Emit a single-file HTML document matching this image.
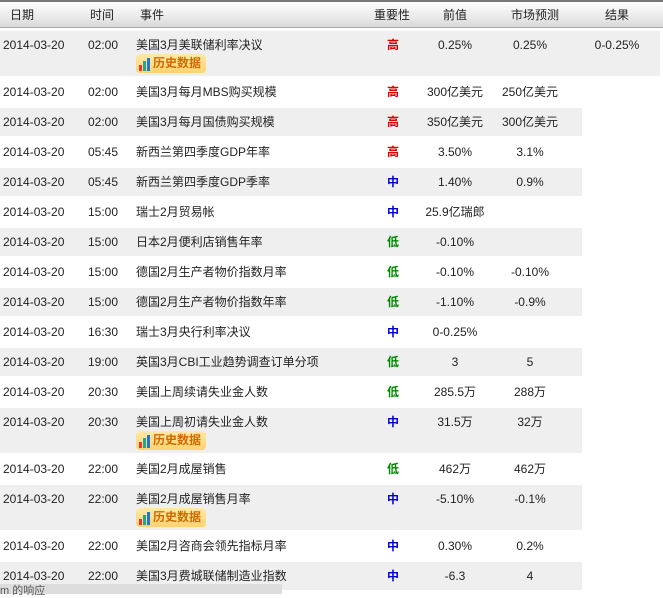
<!DOCTYPE html>
<html><head><meta charset="utf-8"><style>
*{margin:0;padding:0;box-sizing:border-box}
body{width:663px;height:594px;overflow:hidden;background:#fff;font-family:"Liberation Sans","Noto Sans CJK SC",sans-serif;font-size:12px;color:#222;position:relative}
.hd{position:absolute;left:0;top:0;width:663px;height:28px;border-top:2px solid #777;border-bottom:1px solid #aaa;background:linear-gradient(#fff,#e6e6e6 70%,#d8d8d8)}
.r{position:absolute;left:0;width:582px}
.g{background:#efefef}
.c{position:absolute;white-space:nowrap;line-height:14px}
.b{position:absolute;left:136px;width:70px;height:19px;background:linear-gradient(#ffe9a8,#fcd36f);border-radius:4px;font-weight:bold;color:#d06a00;font-size:12px;line-height:19px;padding-left:17px}
.b i{position:absolute;left:3px;bottom:2px;width:3px;height:6px;background:#e33}
.b i+i{left:7px;height:10px;background:#2a8}
.b i+i+i{left:11px;height:13px;background:#27c}
.H{color:#d00;font-weight:bold}.M{color:#00c;font-weight:bold}.L{color:#080;font-weight:bold}
.ov{position:absolute;left:0;top:584px;width:282px;height:10px;background:#ddd;font-size:11px;color:#555;line-height:14px;padding-left:0}
</style></head><body>
<div class="hd"></div>
<div class="c" style="left:10px;top:8px">日期</div>
<div class="c" style="left:90px;top:8px">时间</div>
<div class="c" style="left:140px;top:8px">事件</div>
<div class="c" style="left:374px;top:8px">重要性</div>
<div class="c" style="left:443px;top:8px">前值</div>
<div class="c" style="left:511px;top:8px">市场预测</div>
<div class="c" style="left:605px;top:8px">结果</div>
<div id="rows"></div>
<div class="ov">m 的响应</div>
<script>
var d=[
["02:00","美国3月美联储利率决议","H","0.25%","0.25%","0-0.25%",1],
["02:00","美国3月每月MBS购买规模","H","300亿美元","250亿美元","",0],
["02:00","美国3月每月国债购买规模","H","350亿美元","300亿美元","",0],
["05:45","新西兰第四季度GDP年率","H","3.50%","3.1%","",0],
["05:45","新西兰第四季度GDP季率","M","1.40%","0.9%","",0],
["15:00","瑞士2月贸易帐","M","25.9亿瑞郎","","",0],
["15:00","日本2月便利店销售年率","L","-0.10%","","",0],
["15:00","德国2月生产者物价指数月率","L","-0.10%","-0.10%","",0],
["15:00","德国2月生产者物价指数年率","L","-1.10%","-0.9%","",0],
["16:30","瑞士3月央行利率决议","M","0-0.25%","","",0],
["19:00","英国3月CBI工业趋势调查订单分项","L","3","5","",0],
["20:30","美国上周续请失业金人数","L","285.5万","288万","",0],
["20:30","美国上周初请失业金人数","M","31.5万","32万","",1],
["22:00","美国2月成屋销售","L","462万","462万","",0],
["22:00","美国2月成屋销售月率","M","-5.10%","-0.1%","",1],
["22:00","美国2月咨商会领先指标月率","M","0.30%","0.2%","",0],
["22:00","美国3月费城联储制造业指数","M","-6.3","4","",0]];
var y=30,h="",imp={H:"高",M:"中",L:"低"};
function ctr(x,t,yy,cl){return '<div class="c '+(cl||'')+'" style="left:'+(x-60)+'px;width:120px;text-align:center;top:'+yy+'px">'+t+'</div>';}
d.forEach(function(r,i){
 var ht=r[6]?47:30;
 var w=(i==0)?660:582;
 if(i%2==0)h+='<div class="r g" style="top:'+(y+1)+'px;height:'+(ht-2)+'px;width:'+w+'px"></div>';
 var ty=y+8;
 h+='<div class="c" style="left:3px;top:'+ty+'px">2014-03-20</div>';
 h+='<div class="c" style="left:88px;top:'+ty+'px">'+r[0]+'</div>';
 h+='<div class="c" style="left:136px;top:'+ty+'px">'+r[1]+'</div>';
 h+=ctr(393,imp[r[2]],ty,r[2])+ctr(455,r[3],ty)+ctr(530,r[4],ty)+ctr(617,r[5],ty);
 if(r[6])h+='<div class="b" style="top:'+(y+24)+'px"><i></i><i></i><i></i>历史数据</div>';
 y+=ht;
});
document.getElementById('rows').innerHTML=h;
</script>
</body></html>
